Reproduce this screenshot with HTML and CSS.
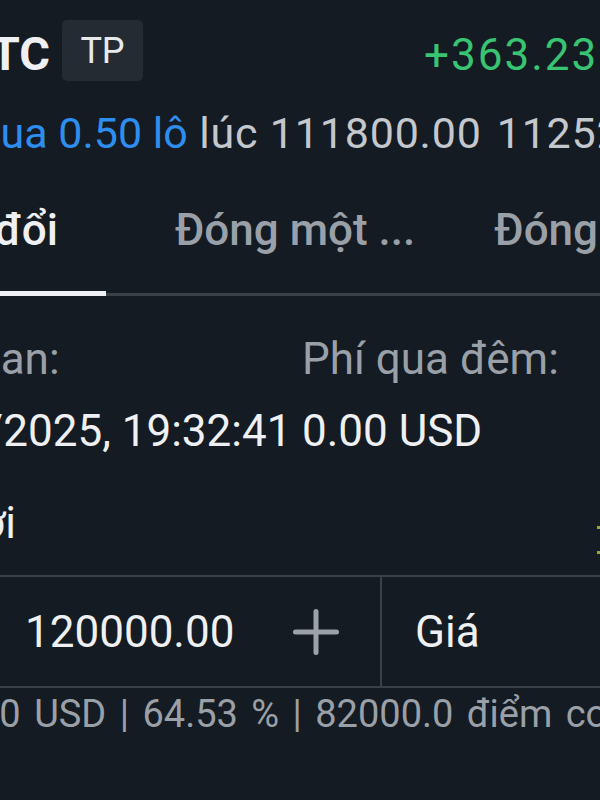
FILE: index.html
```html
<!DOCTYPE html>
<html lang="vi">
<head>
<meta charset="utf-8">
<title>Sửa đổi lệnh</title>
<link rel="stylesheet" href="styles.css">
</head>
<body>
	<div class="screen">
		<div class="head">
			<span class="symbol">BTC</span>
			<span class="badge">TP</span>
			<span class="profit">+363.23 USD</span>
		</div>

		<div class="deal">
			<span class="side">Mua 0.50 lô</span><span class="price"> lúc 111800.00</span><span class="now">112521.50</span>
		</div>

		<div class="tabs">
			<div class="tab active">Sửa đổi</div>
			<div class="tab">Đóng một ...</div>
			<div class="tab">Đóng tất cả</div>
		</div>

		<div class="info">
			<div class="col col-time">
				<div class="label">Thời gian:</div>
				<div class="value">21/07/2025, 19:32:41</div>
			</div>
			<div class="col">
				<div class="label">Phí qua đêm:</div>
				<div class="value">0.00 USD</div>
			</div>
		</div>

		<div class="field-title">
			<span class="name">Chốt lời</span>
			<span class="mark"></span>
		</div>

		<div class="stepper">
			<div class="cell cell-value">
				<span class="num">120000.00</span>
				<svg class="plus" width="46" height="46" viewBox="0 0 46 46">
					<path d="M2.5 23H43.5M23 2.5V43.5" stroke="#9da2a8" stroke-width="5" stroke-linecap="round" fill="none"/>
				</svg>
			</div>
			<div class="cell cell-type">Giá</div>
		</div>

		<div class="hint">+4100.00 USD | 64.53 % | 82000.0 điểm cơ bản</div>
	</div>
</body>
</html>
```

FILE: styles.css
```css
body{
	margin:0;
	padding:0;
	background:#151b22;
	overflow:hidden;
}

.screen{
	width:600px;
	height:800px;
	overflow:hidden;
	white-space:nowrap;
	font-family:Roboto,"Noto Sans",sans-serif;
	font-size:44px;
	color:#eef0f3;
}

/* symbol row */
.head{
	display:flex;
	align-items:baseline;
	padding-top:20px;
}

.head span{
	flex-shrink:0;
}

.symbol{
	width:100px;
	margin-left:-50px;
	margin-top:10px;
	text-align:right;
	font-size:47px;
	font-weight:bold;
	line-height:1;
}

.badge{
	align-self:flex-start;
	box-sizing:border-box;
	margin-left:12px;
	width:81px;
	height:61px;
	padding-top:1px;
	line-height:60px;
	text-align:center;
	font-size:36px;
	background:#252b33;
	border-radius:5px;
	color:#e8eaed;
}

.profit{
	margin-left:281px;
	line-height:1;
	letter-spacing:2px;
	color:#38c472;
}

.deal{
	margin-top:27px;
	margin-left:-37px;
	font-size:43px;
	line-height:50px;
}

.side{
	color:#2e8ef0;
}

.price,
.now{
	letter-spacing:0.8px;
	color:#c4c8cd;
}

.now{
	margin-left:15px;
}

/* tabs */
.tabs{
	display:flex;
	margin-top:47px;
	border-bottom:3px solid #3a4048;
	font-weight:500;
}

.tab{
	flex-shrink:0;
	line-height:50px;
	padding-bottom:36px;
	color:#9aa0a8;
}

.tab.active{
	box-sizing:border-box;
	width:200px;
	margin-left:-94px;
	margin-bottom:-3px;
	padding-right:48px;
	text-align:right;
	color:#eef0f3;
	border-bottom:5px solid #eef0f3;
}

.tab + .tab{
	margin-left:69px;
}

.tab + .tab + .tab{
	margin-left:79px;
}

/* info */
.info{
	display:flex;
	margin-top:38px;
}

.col{
	flex-shrink:0;
}

.col-time{
	width:434px;
	margin-left:-132px;
}

.label{
	line-height:50px;
	color:#9aa0a8;
}

.value{
	margin-top:22px;
	line-height:50px;
}

.field-title{
	display:flex;
	align-items:flex-start;
	margin-top:42px;
	line-height:50px;
}

.name{
	flex:0 0 200px;
	margin-left:-184px;
	text-align:right;
}

.mark{
	margin-left:auto;
	margin-top:28px;
	width:3px;
	height:3px;
	background:#a39f3a;
	box-shadow:0 25px 0 #a39f3a;
}

/* stepper */
.stepper{
	display:flex;
	height:109px;
	margin-top:27px;
	border-top:2px solid #3a4048;
	border-bottom:2px solid #3a4048;
}

.cell{
	display:flex;
	align-items:center;
}

.cell-value{
	box-sizing:border-box;
	flex:0 0 380px;
	padding-left:25px;
}

.plus{
	margin-left:auto;
	margin-right:41px;
}

.cell-type{
	flex:1;
	padding-left:33px;
	border-left:2px solid #3a4048;
}

.hint{
	margin-top:4px;
	margin-left:-139px;
	font-size:38px;
	line-height:44px;
	word-spacing:4px;
	color:#9aa0a8;
}
```
